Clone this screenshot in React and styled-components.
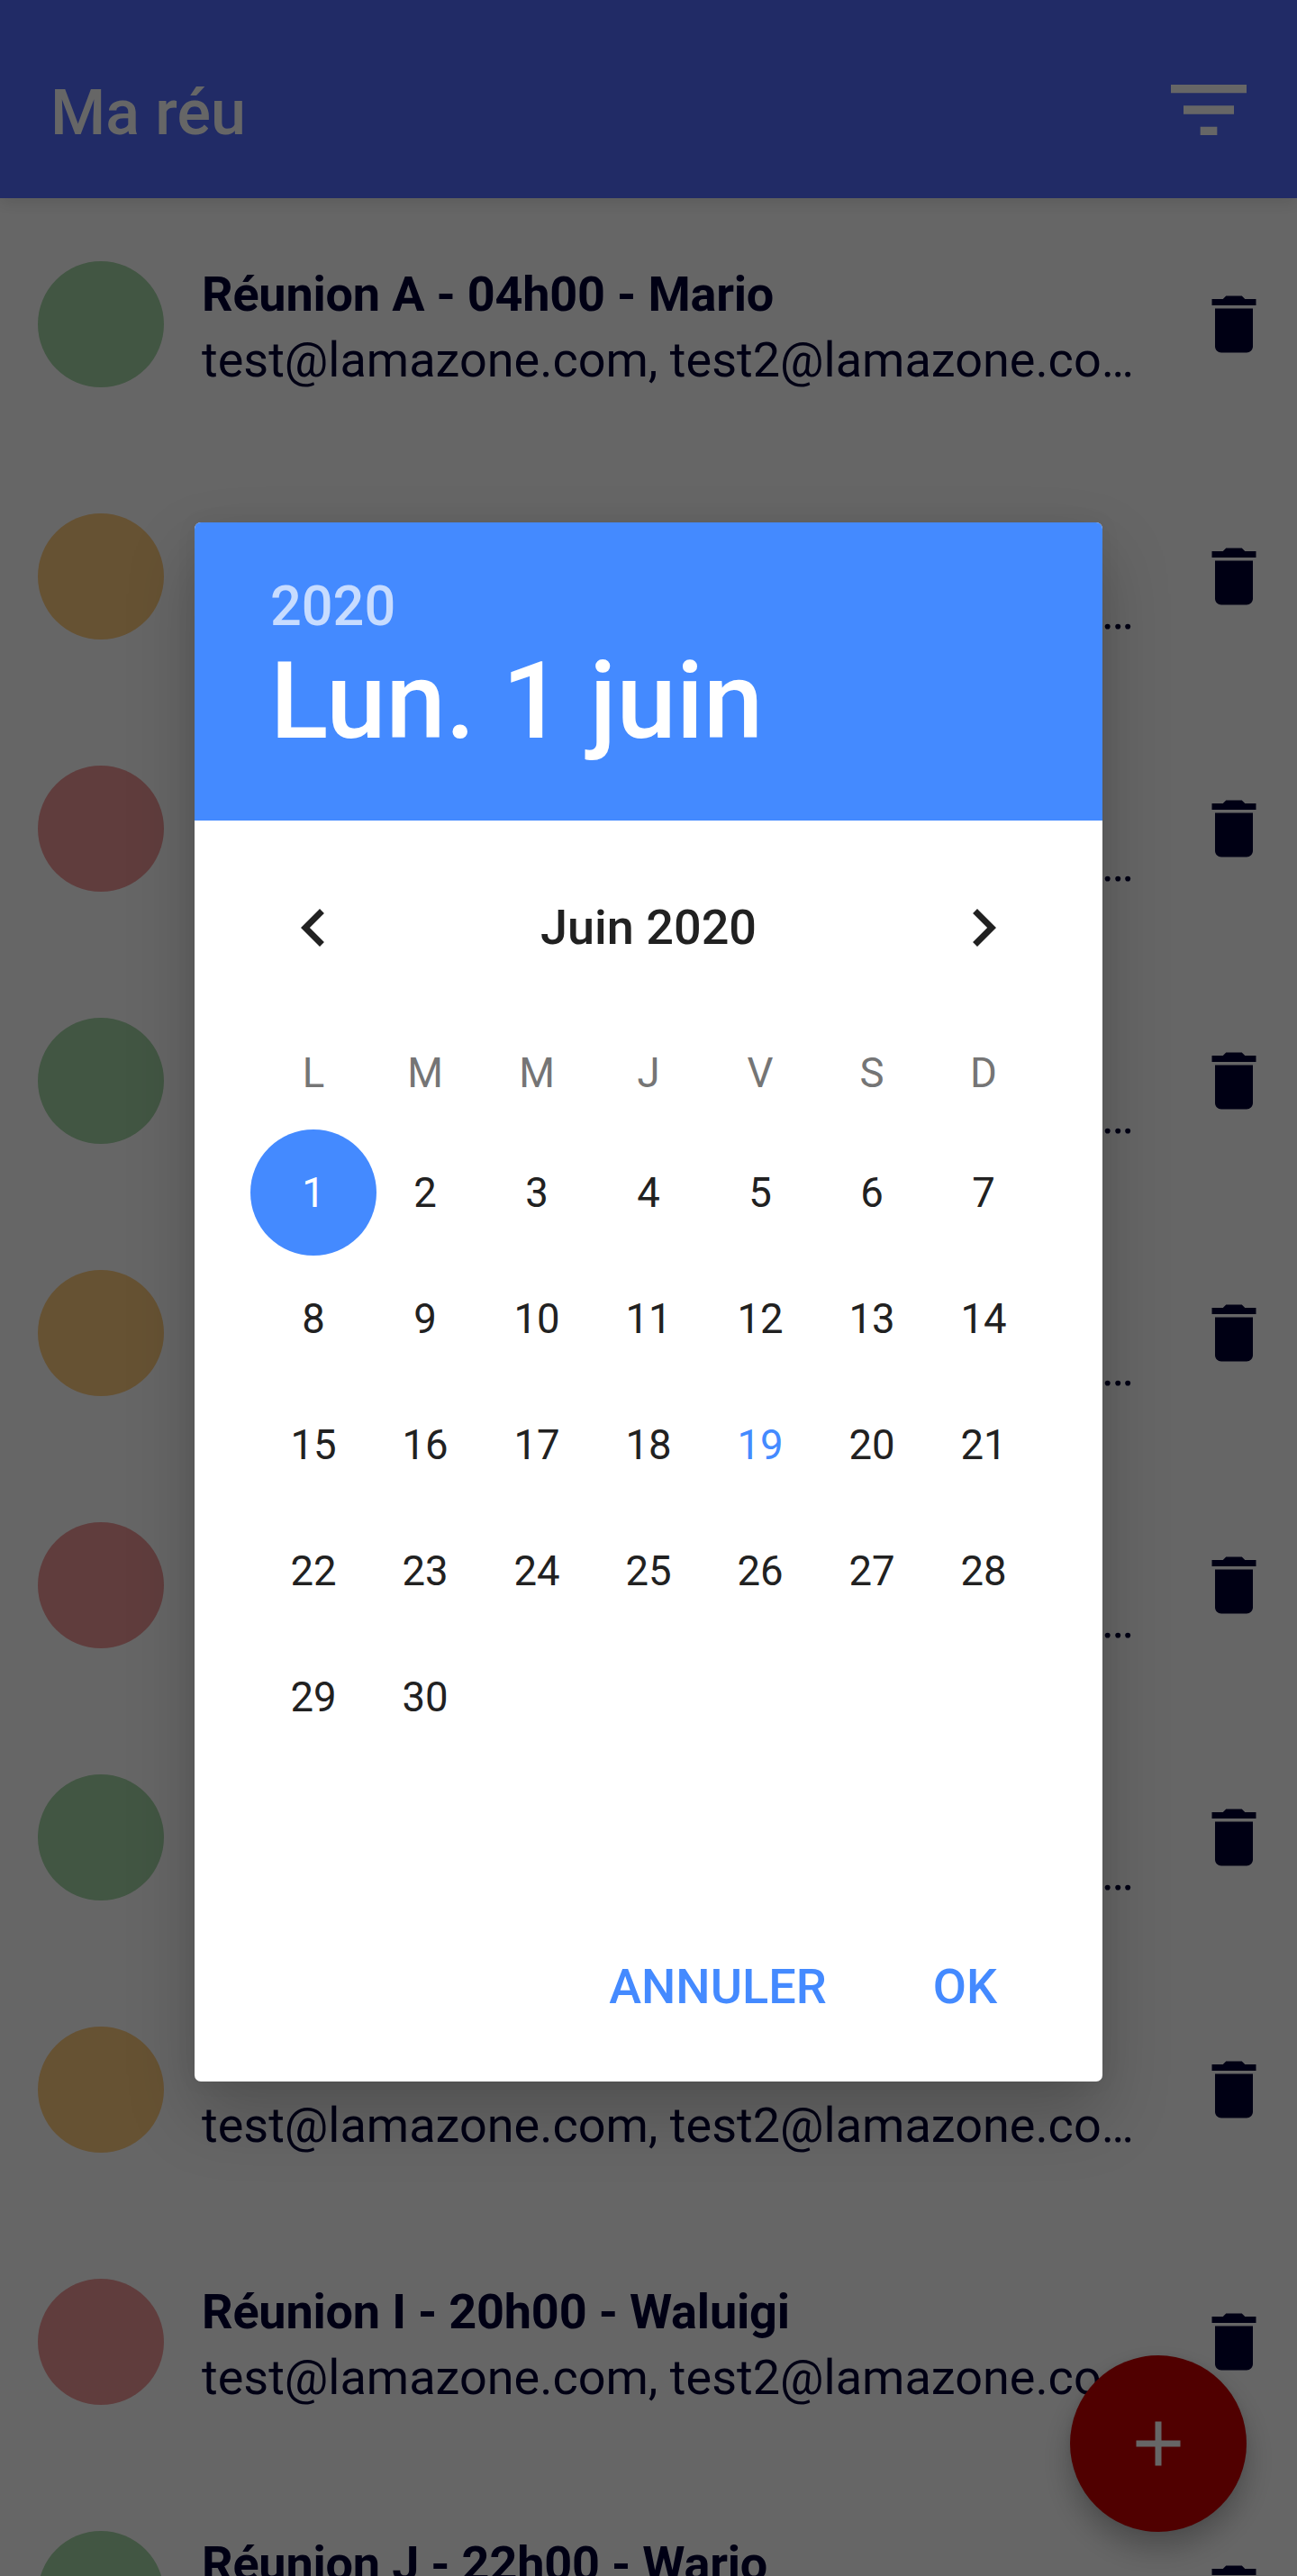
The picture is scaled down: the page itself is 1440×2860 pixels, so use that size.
import React from "react";
import styled, { createGlobalStyle } from "styled-components";

const GlobalStyle = createGlobalStyle`
  *, *::before, *::after { box-sizing: border-box; }
  html, body { margin: 0; padding: 0; }
  body {
    background: #fff;
    font-family: Roboto, "Noto Sans", sans-serif;
    overflow: hidden;
  }
  button {
    border: 0;
    padding: 0;
    margin: 0;
    background: none;
    font: inherit;
    color: inherit;
    cursor: pointer;
  }
`;

const Screen = styled.div`
  position: relative;
  width: 1440px;
  height: 2860px;
  overflow: hidden;
  background: #fff;
`;

const Toolbar = styled.header`
  position: relative;
  display: flex;
  align-items: center;
  justify-content: space-between;
  height: 220px;
  padding: 24px 42px 0 56px;
  background: #536dfe;
  box-shadow: 0 6px 16px rgba(0, 0, 0, 0.1);
`;

const AppTitle = styled.h1`
  margin: 0;
  padding-top: 6px;
  font-size: 70px;
  line-height: 82px;
  font-weight: 500;
  color: #fff;
`;

const IconButton = styled.button`
  display: flex;
  flex: none;
  color: ${(p) => p.$color};
`;

const Icon = styled.svg`
  display: block;
  width: ${(p) => p.$size}px;
  height: ${(p) => p.$size}px;
  fill: currentColor;
`;

const MeetingList = styled.ul`
  margin: 0;
  padding: 0;
  list-style: none;
`;

const MeetingRow = styled.li`
  display: flex;
  align-items: center;
  height: 280px;
  padding: 0 28px 0 42px;
`;

const Dot = styled.span`
  flex: none;
  width: 140px;
  height: 140px;
  border-radius: 50%;
  background: ${(p) => p.$color};
`;

const MeetingText = styled.div`
  flex: 1;
  min-width: 0;
  margin-left: 42px;
  padding-top: 6px;
  color: #000033;
  font-size: 54px;
  line-height: 73px;
  white-space: nowrap;
`;

const MeetingTitle = styled.div`
  font-weight: 700;
  letter-spacing: -0.2px;
`;

const MeetingGuests = styled.div`
  font-weight: 400;
`;

const Fab = styled.button`
  position: absolute;
  left: 1188px;
  top: 2615px;
  display: flex;
  align-items: center;
  justify-content: center;
  width: 196px;
  height: 196px;
  border-radius: 50%;
  background: #c80000;
  color: #fff;
  box-shadow: 0 18px 32px rgba(0, 0, 0, 0.26), 0 0 8px rgba(0, 0, 0, 0.06);
`;

const Scrim = styled.div`
  position: absolute;
  inset: 0;
  padding: 580px 216px 0;
  background: rgba(0, 0, 0, 0.6);
`;

const Dialog = styled.section`
  display: flex;
  flex-direction: column;
  height: 1731px;
  border-radius: 7px;
  overflow: hidden;
  background: #fff;
  box-shadow: 0 36px 76px rgba(0, 0, 0, 0.21), 0 0 24px rgba(0, 0, 0, 0.05);
`;

const DialogHeader = styled.header`
  flex: none;
  height: 331px;
  padding: 56px 84px 0;
  background: #448aff;
  font-weight: 500;
`;

const Year = styled.div`
  font-size: 61.25px;
  line-height: 74px;
  color: rgba(255, 255, 255, 0.7);
`;

const SelectedDate = styled.div`
  margin-top: -1px;
  font-size: 119px;
  line-height: 139px;
  color: #fff;
`;

const MonthBar = styled.div`
  display: flex;
  flex: none;
  align-items: center;
  justify-content: space-between;
  height: 84px;
  margin: 77px 90px 0;
`;

const MonthName = styled.div`
  font-size: 54px;
  line-height: 64px;
  font-weight: 500;
  color: #212121;
`;

const Grid = styled.div`
  display: grid;
  flex: none;
  grid-template-columns: repeat(7, 124px);
  grid-auto-rows: ${(p) => p.$row}px;
  justify-content: center;
  margin-top: ${(p) => p.$top}px;
`;

const Weekday = styled.span`
  font-size: 45.5px;
  line-height: 54px;
  text-align: center;
  color: #757575;
`;

const Day = styled.button`
  display: flex;
  align-items: center;
  justify-content: center;
  justify-self: center;
  width: 140px;
  height: 140px;
  margin: 0 -8px;
  border-radius: 50%;
  font-size: 45.5px;
  background: ${(p) => (p.$selected ? "#448aff" : "transparent")};
  color: ${(p) => (p.$selected ? "#fff" : p.$today ? "#448aff" : "#212121")};
`;

const Actions = styled.footer`
  display: flex;
  justify-content: flex-end;
  gap: 118px;
  margin-top: auto;
  padding: 0 117px 73px 0;
`;

const Action = styled.button`
  font-size: 54px;
  line-height: 64px;
  font-weight: 500;
  color: #448aff;
`;

const GREEN = "#a5d6a7";
const ORANGE = "#ffcc80";
const RED = "#ef9a9a";

const MEETINGS = [
  ["A", "04h00", "Mario", GREEN],
  ["B", "06h00", "Luigi", ORANGE],
  ["C", "08h00", "Peach", RED],
  ["D", "10h00", "Yoshi", GREEN],
  ["E", "12h00", "Daisy", ORANGE],
  ["F", "14h00", "Boo", RED],
  ["G", "16h00", "Bowser", GREEN],
  ["H", "18h00", "Toad", ORANGE],
  ["I", "20h00", "Waluigi", RED],
  ["J", "22h00", "Wario", GREEN],
];

const WEEKDAYS = ["L", "M", "M", "J", "V", "S", "D"];
const DAYS = Array.from({ length: 30 }, (_, i) => i + 1);

const PATHS = {
  filter: "M10 18h4v-2h-4v2zM3 6v2h18V6H3zm3 7h12v-2H6v2z",
  trash: "M6 19c0 1.1.9 2 2 2h8c1.1 0 2-.9 2-2V7H6v12zM19 4h-3.5l-1-1h-5l-1 1H5v2h14V4z",
  prev: "M15.41 7.41L14 6l-6 6 6 6 1.41-1.41L10.83 12z",
  next: "M10 6L8.59 7.41 13.17 12l-4.58 4.59L10 18l6-6z",
  add: "M19 13h-6v6h-2v-6H5v-2h6V5h2v6h6v2z",
};

function Glyph({ name, size = 84 }) {
  return (
    <Icon $size={size} viewBox="0 0 24 24" aria-hidden="true">
      <path d={PATHS[name]} />
    </Icon>
  );
}

export default function App() {
  return (
    <>
      <GlobalStyle />
      <Screen>
        <Toolbar>
          <AppTitle>Ma réu</AppTitle>
          <IconButton $color="#fff" aria-label="Filtrer">
            <Glyph name="filter" size={112} />
          </IconButton>
        </Toolbar>

        <MeetingList>
          {MEETINGS.map(([room, time, host, color]) => (
            <MeetingRow key={room}>
              <Dot $color={color} />
              <MeetingText>
                <MeetingTitle>{`Réunion ${room} - ${time} - ${host}`}</MeetingTitle>
                <MeetingGuests>test@lamazone.com, test2@lamazone.co…</MeetingGuests>
              </MeetingText>
              <IconButton $color="#000033" aria-label="Supprimer">
                <Glyph name="trash" />
              </IconButton>
            </MeetingRow>
          ))}
        </MeetingList>

        <Fab aria-label="Ajouter">
          <Glyph name="add" />
        </Fab>

        <Scrim>
          <Dialog>
            <DialogHeader>
              <Year>2020</Year>
              <SelectedDate>Lun. 1 juin</SelectedDate>
            </DialogHeader>
            <MonthBar>
              <IconButton $color="#212121" aria-label="Mois précédent">
                <Glyph name="prev" />
              </IconButton>
              <MonthName>Juin 2020</MonthName>
              <IconButton $color="#212121" aria-label="Mois suivant">
                <Glyph name="next" />
              </IconButton>
            </MonthBar>
            <Grid $row={54} $top={93}>
              {WEEKDAYS.map((d, i) => (
                <Weekday key={i}>{d}</Weekday>
              ))}
            </Grid>
            <Grid $row={140} $top={35}>
              {DAYS.map((d) => (
                <Day key={d} $selected={d === 1} $today={d === 19}>
                  {d}
                </Day>
              ))}
            </Grid>
            <Actions>
              <Action>ANNULER</Action>
              <Action>OK</Action>
            </Actions>
          </Dialog>
        </Scrim>
      </Screen>
    </>
  );
}
